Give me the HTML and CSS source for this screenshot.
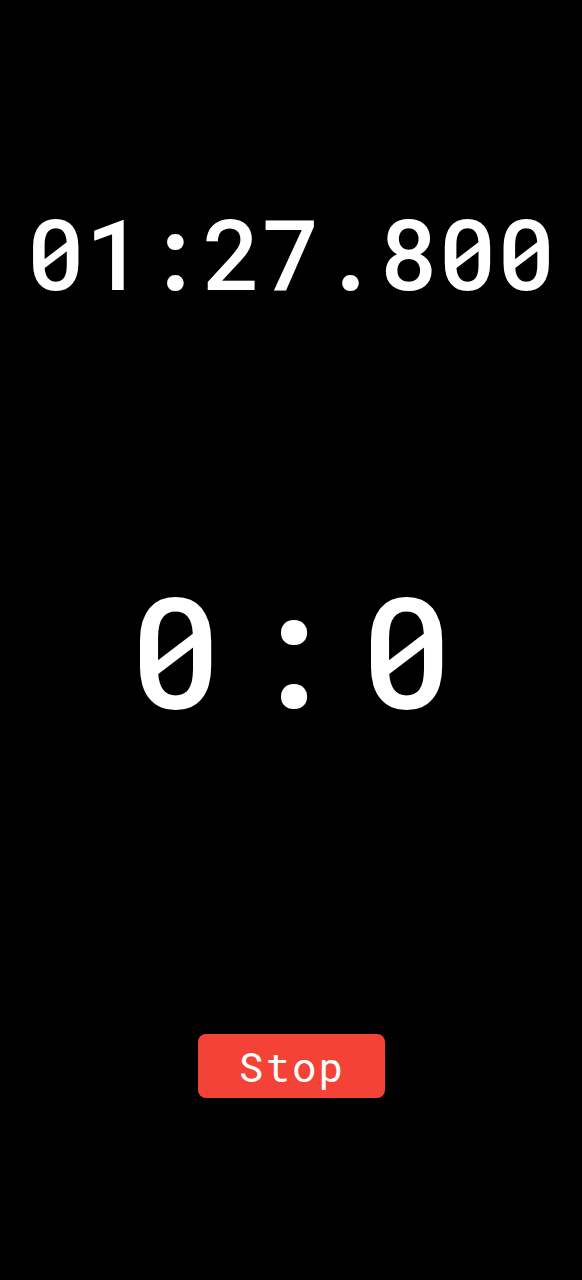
FILE: index.html
```html
<!DOCTYPE html>
<html lang="en">
<head>
<meta charset="utf-8">
<title>Timer</title>
<link rel="stylesheet" href="styles.css">
</head>
<body>
<main class="screen">
  <div class="elapsed">01:27.800</div>
  <div class="score">
    <span>0</span><span class="colon">:</span><span>0</span>
  </div>
  <button class="stop">Stop</button>
</main>
</body>
</html>
```
FILE: styles.css
```css
html, body {
  margin: 0;
  padding: 0;
  background: #000;
}
.screen {
  width: 582px;
  height: 1280px;
  display: flex;
  flex-direction: column;
  align-items: center;
  padding-top: 203px;
  box-sizing: border-box;
  font-family: "Roboto Mono", "DejaVu Sans Mono", monospace;
  color: #fff;
}
.elapsed {
  font-size: 98px;
  font-weight: 500;
  line-height: 1;
  white-space: nowrap;
}
.score {
  margin-top: 271px;
  display: flex;
  gap: 23px;
  font-size: 154px;
  font-weight: 500;
  line-height: 1;
}
.stop {
  margin-top: 308px;
  width: 187px;
  height: 64px;
  border: none;
  border-radius: 8px;
  background: #f44336;
  color: #fff;
  font-family: "Roboto Mono", "DejaVu Sans Mono", monospace;
  font-size: 41px;
  letter-spacing: 2px;
  text-indent: 2px;
  display: flex;
  align-items: center;
  justify-content: center;
  padding: 0;
}
```
